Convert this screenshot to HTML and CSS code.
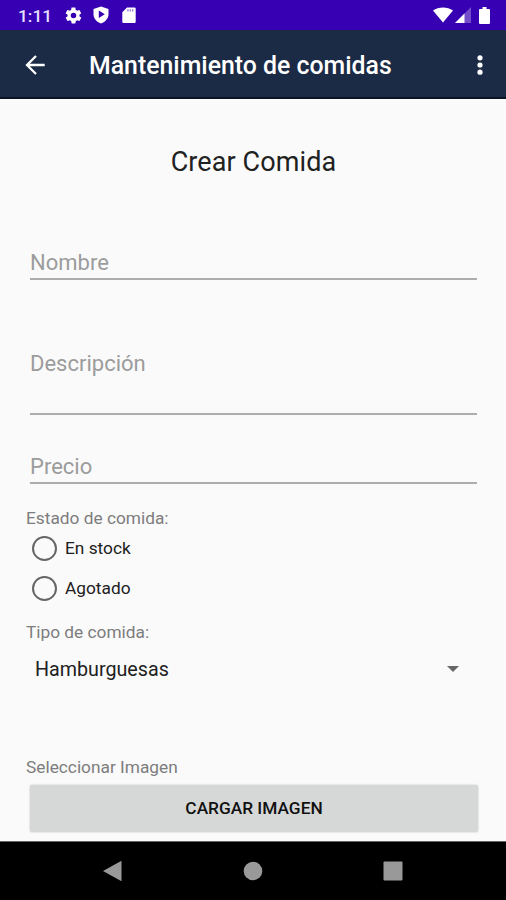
FILE: index.html
```html
<!DOCTYPE html>
<html lang="es">
<head>
  <meta charset="UTF-8" />
  <meta name="viewport" content="width=device-width, initial-scale=1.0"/>
  <title>Mantenimiento de comidas</title>
  <link rel="stylesheet" href="styles.css">
</head>
<body>

  <!-- Status bar -->
  <div class="status-bar">
    <span class="clock">1:11</span>
    <svg class="icon-gear" width="19" height="19" viewBox="0 0 24 24"><path fill="#fff" d="M19.4 13c0-.3.1-.6.1-1s0-.7-.1-1l2.1-1.6c.2-.2.3-.4.1-.7l-2-3.4c-.1-.2-.4-.3-.6-.2l-2.5 1c-.5-.4-1.1-.7-1.7-1l-.4-2.6c0-.3-.2-.5-.5-.5h-4c-.2 0-.4.2-.5.4l-.4 2.7c-.6.3-1.2.6-1.7 1l-2.5-1c-.2-.1-.5 0-.6.2l-2 3.4c-.1.3 0 .5.2.7L4.6 11c0 .3-.1.6-.1 1s0 .7.1 1l-2.2 1.6c-.2.2-.3.4-.1.7l2 3.4c.1.2.4.3.6.2l2.5-1c.5.4 1.1.7 1.7 1l.4 2.6c0 .3.3.5.5.5h4c.3 0 .5-.2.5-.5l.4-2.6c.6-.3 1.2-.6 1.7-1l2.5 1c.2.1.5 0 .6-.2l2-3.4c.1-.2.1-.5-.1-.7L19.4 13zM12 15.5a3.500 3.500 0 1 1 0-7 3.500 3.500 0 0 1 0 7z"/></svg>
    <svg class="icon-shield" width="18" height="20" viewBox="0 0 18 20"><path fill="#fff" fill-rule="evenodd" d="M9 1.500 16.500 4v5c0 4.500-3 7.800-7.500 9.500C4.500 16.800 1.500 13.500 1.500 9V4L9 1.500zM6.800 5.500v7.600L12.800 9.300z"/></svg>
    <svg class="icon-card" width="14" height="17" viewBox="0 0 14 17"><path fill="#fff" d="M5 .5h7.500a1.200 1.200 0 0 1 1.200 1.200v13.100a1.200 1.200 0 0 1-1.200 1.200h-11A1.200 1.200 0 0 1 .3 14.800V5.200z"/><path fill="#3700b3" opacity=".5" d="M5.200 2.300h1.400v2.300H5.200zM7.600 2.300H9v2.300H7.600zM10 2.300h1.400v2.300H10z"/></svg>
    <div class="signals">
      <svg width="20" height="16" viewBox="0 0 20 16"><path fill="#fff" d="M0 3.500C5.500-.6 14.500-.6 20 3.500L10 15.500z"/></svg>
      <svg class="icon-cell" width="16" height="16" viewBox="0 0 16 16"><path fill="#fff" opacity=".3" d="M0 16 16 0v16z"/><path fill="#fff" d="M0 16 9.500 6.500V16z"/></svg>
      <svg class="icon-battery" width="11" height="17" viewBox="0 0 11 17"><path fill="#fff" d="M3.500 0h4v2H10a1 1 0 0 1 1 1v13a1 1 0 0 1-1 1H1a1 1 0 0 1-1-1V3a1 1 0 0 1 1-1h2.500z"/></svg>
    </div>
  </div>

  <!-- App bar -->
  <header class="app-bar">
    <svg width="20" height="20" viewBox="0 0 20 20" fill="none" stroke="#fff" stroke-width="2.3"><path d="M19.7 10H2M11 1 2 10l9 9"/></svg>
    <h1>Mantenimiento de comidas</h1>
    <svg class="icon-menu" width="6" height="20" viewBox="0 0 6 20" fill="#fff"><circle cx="3" cy="2.8" r="2.6"/><circle cx="3" cy="10" r="2.6"/><circle cx="3" cy="17.2" r="2.6"/></svg>
  </header>

  <main class="form">
    <h2>Crear Comida</h2>

    <input class="field nombre" type="text" placeholder="Nombre">
    <textarea class="field descripcion" placeholder="Descripción"></textarea>
    <input class="field precio" type="text" placeholder="Precio">

    <p class="label">Estado de comida:</p>
    <label class="option"><input type="radio" name="estado"><span>En stock</span></label>
    <label class="option"><input type="radio" name="estado"><span>Agotado</span></label>

    <p class="label tipo">Tipo de comida:</p>
    <div class="spinner">
      <span>Hamburguesas</span>
      <svg width="12" height="6" viewBox="0 0 12 6"><path fill="#666" d="M0 0h12L6 6z"/></svg>
    </div>

    <p class="label">Seleccionar Imagen</p>
    <button class="upload">CARGAR IMAGEN</button>
  </main>

  <!-- Navigation bar -->
  <nav class="nav-bar">
    <svg width="20" height="22" viewBox="0 0 20 22"><path fill="#999" d="M19.5.8v20.4L1 11z"/></svg>
    <svg width="20" height="20" viewBox="0 0 20 20"><circle cx="10" cy="10" r="9.3" fill="#999"/></svg>
    <svg width="20" height="20" viewBox="0 0 20 20"><rect x=".5" y=".5" width="19" height="19" rx="1" fill="#999"/></svg>
  </nav>

</body>
</html>
```
FILE: styles.css
```css
* {
  box-sizing: border-box;
}

body {
  margin: 0;
  height: 900px;
  display: flex;
  flex-direction: column;
  font-family: Roboto, sans-serif;
  background: #fafafa;
  color: #212121;
  overflow: hidden;
}

svg {
  display: block;
  flex: none;
}

.status-bar {
  height: 30px;
  padding: 0 16px 0 18px;
  display: flex;
  align-items: center;
  background: #3700b3;
}

.clock {
  width: 46px;
  color: #e8e0ff;
  font-size: 17.3px;
  font-weight: 500;
  padding-top: 2px;
}

.icon-gear {
  margin-top: 1px;
}

.icon-shield {
  margin-left: 9px;
}

.icon-card {
  margin-left: 12px;
}

.signals {
  margin-left: auto;
  display: flex;
  align-items: center;
}

.icon-cell {
  margin-left: 2px;
}

.icon-battery {
  margin-left: 8px;
}

.app-bar {
  height: 69px;
  padding: 2px 23px 0 25px;
  display: flex;
  align-items: center;
  background: #1b2a45;
  border-bottom: 2px solid #0c1322;
}

.app-bar h1 {
  margin: 2px 0 0 44px;
  color: #fff;
  font-size: 24.85px;
  font-weight: 500;
  white-space: nowrap;
}

.icon-menu {
  margin-left: auto;
}

.form {
  flex: 1;
  padding: 0 25px;
  display: flex;
  flex-direction: column;
}

.form h2 {
  margin: 46px 0 0;
  padding-left: 1px;
  text-align: center;
  font-size: 27px;
  font-weight: 400;
  line-height: 34px;
  letter-spacing: 0.1px;
}

.field {
  margin: 0 4px 0 5px;
  padding: 0;
  border: none;
  border-bottom: 2px solid #adadad;
  border-radius: 0;
  outline: none;
  background: transparent;
  font-family: inherit;
  font-size: 22px;
  line-height: 28px;
  resize: none;
}

.field::placeholder {
  color: #9c9c9c;
}

.nombre {
  height: 32px;
  margin-top: 69px;
  padding-bottom: 1px;
}

.descripcion {
  height: 65px;
  margin-top: 70px;
}

.precio {
  height: 33px;
  margin-top: 36px;
  padding-bottom: 1px;
}

.label {
  margin: 24px 0 0;
  padding-left: 1px;
  color: #7d7d7d;
  font-size: 17.3px;
  line-height: 20px;
}

.option {
  height: 40px;
  padding-left: 7px;
  display: flex;
  align-items: center;
  font-size: 17.3px;
}

.option input {
  appearance: none;
  width: 25px;
  height: 25px;
  margin: 0 8px 0 0;
  border: 2px solid #666;
  border-radius: 50%;
}

.tipo {
  margin-top: 14px;
}

.spinner {
  height: 53px;
  padding: 1px 22px 0 10px;
  display: flex;
  align-items: center;
  justify-content: space-between;
  font-size: 19.7px;
}

.spinner + .label {
  margin-top: 62px;
}

.upload {
  height: 47px;
  margin: 8px 3px 0 5px;
  padding: 0 0 2px;
  border: none;
  border-radius: 2px;
  background: #d6d8d7;
  box-shadow: 0 0 2px rgba(0, 0, 0, 0.25);
  color: #111;
  font-family: inherit;
  font-size: 17.3px;
  font-weight: 500;
}

.nav-bar {
  height: 59px;
  padding: 0 103px 0 102px;
  display: flex;
  align-items: center;
  justify-content: space-between;
  background: #000;
  border-top: 1px solid #666;
}
```
